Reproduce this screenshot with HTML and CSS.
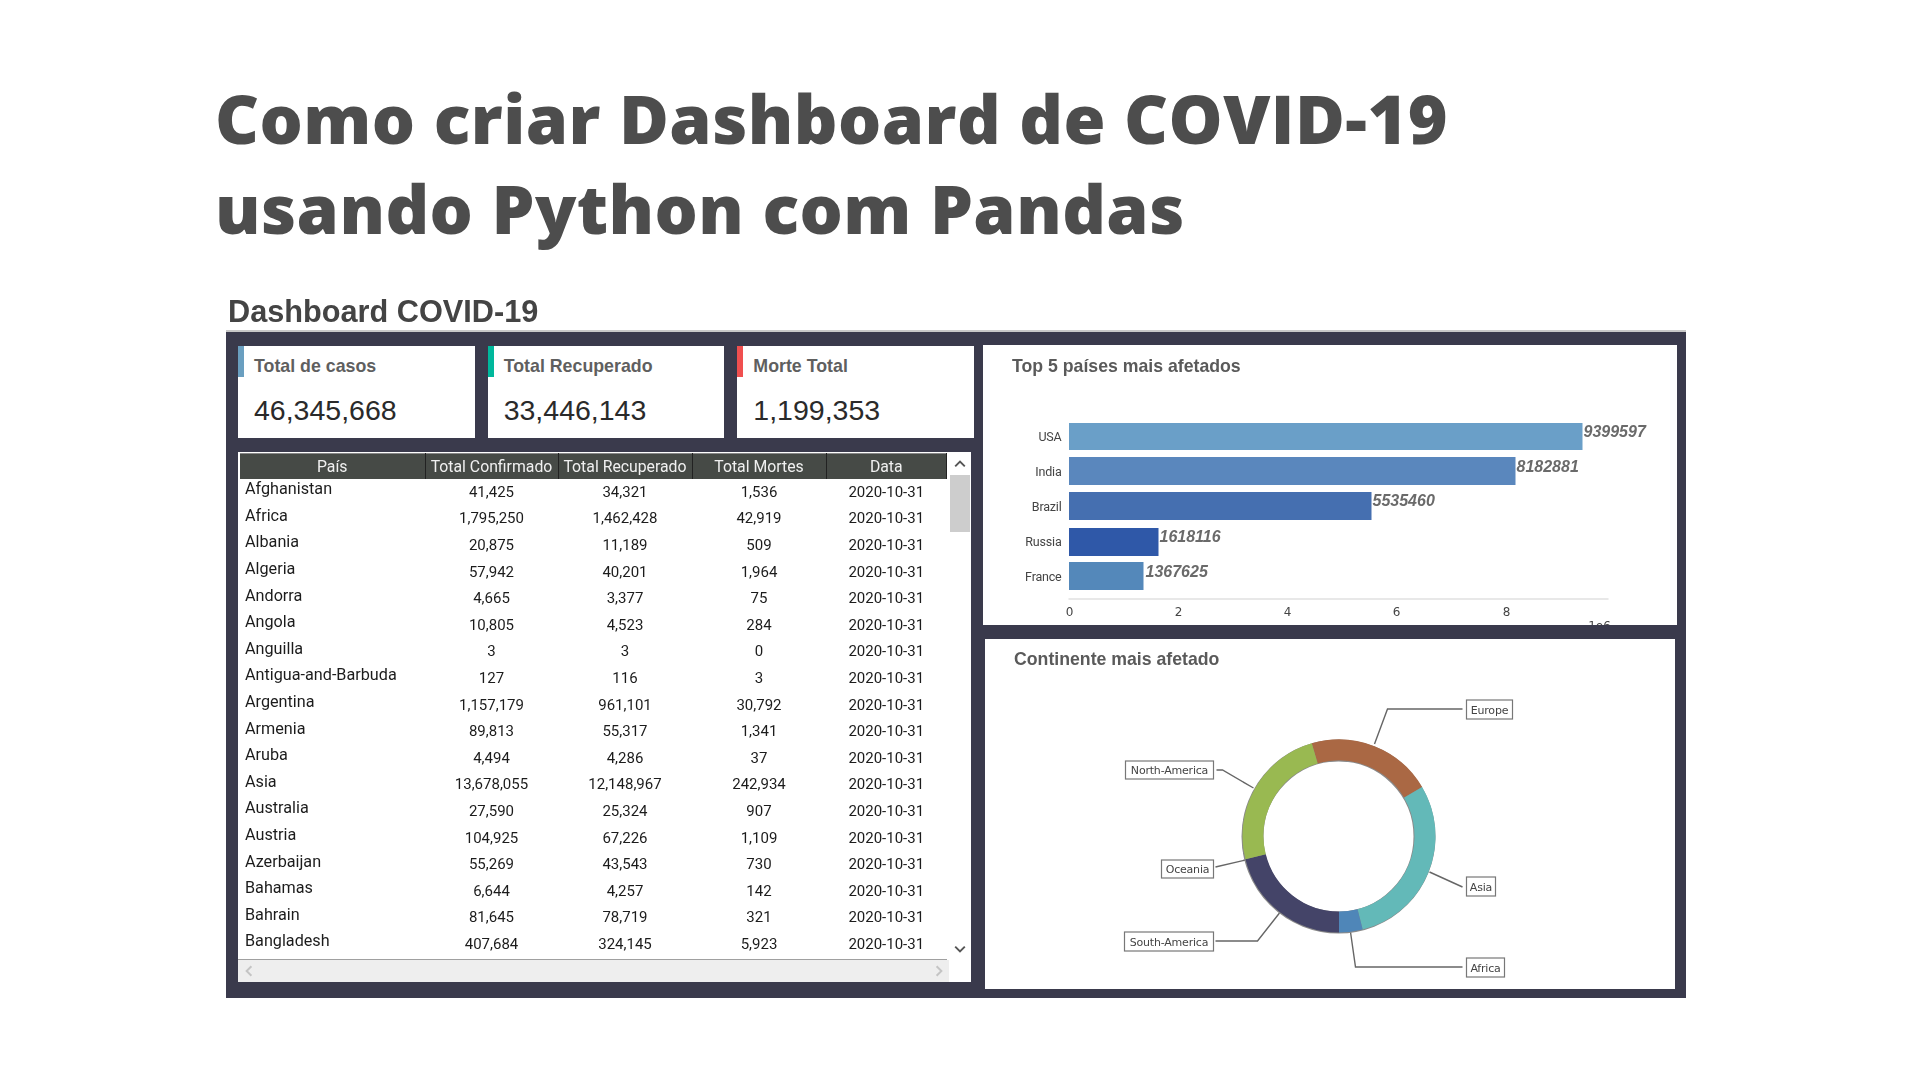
FILE: index.html
```html
<!DOCTYPE html>
<html lang="pt">
<head>
    <meta charset="UTF-8">
    <title>Como criar Dashboard de COVID-19 usando Python com Pandas</title>
    <link rel="stylesheet" href="styles.css">
</head>
<body>

<h1>Como criar Dashboard de COVID-19<br>usando Python com Pandas</h1>

<div class="dash">
    <h2>Dashboard COVID-19</h2>
    <div class="panel">
        <div class="left">
            <div class="cards">
                <div class="card">
                    <span class="accent blue"></span>
                    <div class="label">Total de casos</div>
                    <div class="value">46,345,668</div>
                </div>
                <div class="card">
                    <span class="accent green"></span>
                    <div class="label">Total Recuperado</div>
                    <div class="value">33,446,143</div>
                </div>
                <div class="card">
                    <span class="accent red"></span>
                    <div class="label">Morte Total</div>
                    <div class="value">1,199,353</div>
                </div>
            </div>

            <div class="tablebox">
                <div class="tablearea">
                    <table>
                        <thead>
                            <tr><th>País</th><th>Total Confirmado</th><th>Total Recuperado</th><th>Total Mortes</th><th>Data</th></tr>
                        </thead>
                        <tbody>
                            <tr><td>Afghanistan</td><td>41,425</td><td>34,321</td><td>1,536</td><td>2020-10-31</td></tr>
                            <tr><td>Africa</td><td>1,795,250</td><td>1,462,428</td><td>42,919</td><td>2020-10-31</td></tr>
                            <tr><td>Albania</td><td>20,875</td><td>11,189</td><td>509</td><td>2020-10-31</td></tr>
                            <tr><td>Algeria</td><td>57,942</td><td>40,201</td><td>1,964</td><td>2020-10-31</td></tr>
                            <tr><td>Andorra</td><td>4,665</td><td>3,377</td><td>75</td><td>2020-10-31</td></tr>
                            <tr><td>Angola</td><td>10,805</td><td>4,523</td><td>284</td><td>2020-10-31</td></tr>
                            <tr><td>Anguilla</td><td>3</td><td>3</td><td>0</td><td>2020-10-31</td></tr>
                            <tr><td>Antigua-and-Barbuda</td><td>127</td><td>116</td><td>3</td><td>2020-10-31</td></tr>
                            <tr><td>Argentina</td><td>1,157,179</td><td>961,101</td><td>30,792</td><td>2020-10-31</td></tr>
                            <tr><td>Armenia</td><td>89,813</td><td>55,317</td><td>1,341</td><td>2020-10-31</td></tr>
                            <tr><td>Aruba</td><td>4,494</td><td>4,286</td><td>37</td><td>2020-10-31</td></tr>
                            <tr><td>Asia</td><td>13,678,055</td><td>12,148,967</td><td>242,934</td><td>2020-10-31</td></tr>
                            <tr><td>Australia</td><td>27,590</td><td>25,324</td><td>907</td><td>2020-10-31</td></tr>
                            <tr><td>Austria</td><td>104,925</td><td>67,226</td><td>1,109</td><td>2020-10-31</td></tr>
                            <tr><td>Azerbaijan</td><td>55,269</td><td>43,543</td><td>730</td><td>2020-10-31</td></tr>
                            <tr><td>Bahamas</td><td>6,644</td><td>4,257</td><td>142</td><td>2020-10-31</td></tr>
                            <tr><td>Bahrain</td><td>81,645</td><td>78,719</td><td>321</td><td>2020-10-31</td></tr>
                            <tr><td>Bangladesh</td><td>407,684</td><td>324,145</td><td>5,923</td><td>2020-10-31</td></tr>
                        </tbody>
                    </table>
                </div>
                <div class="vscroll">
                    <svg class="arrow" viewBox="0 0 10 10"><path d="M1 7L5 3l4 4" fill="none" stroke="#555" stroke-width="1.6"/></svg>
                    <div class="thumb"></div>
                    <svg class="arrow down" viewBox="0 0 10 10"><path d="M1 3l4 4 4-4" fill="none" stroke="#555" stroke-width="1.6"/></svg>
                </div>
                <div class="hscroll">
                    <svg class="arrow" viewBox="0 0 10 10"><path d="M7 1L3 5l4 4" fill="none" stroke="#c4c4c4" stroke-width="1.6"/></svg>
                    <svg class="arrow" viewBox="0 0 10 10"><path d="M3 1l4 4-4 4" fill="none" stroke="#c4c4c4" stroke-width="1.6"/></svg>
                </div>
            </div>
        </div>

        <div class="right">
            <div class="chart top">
                <div class="chart-title">Top 5 países mais afetados</div>
                <!-- viewBox na mesma escala da página, origem no canto do card -->
                <svg class="plot" viewBox="984 345 693 280">
                    <rect x="1069.5" y="423" width="513.5" height="27" fill="#6a9fc8"/>
                    <rect x="1069.5" y="457" width="446.5" height="28" fill="#5a87bd"/>
                    <rect x="1069.5" y="492" width="302.5" height="28" fill="#456fb0"/>
                    <rect x="1069.5" y="528" width="89.5" height="28" fill="#2f58a8"/>
                    <rect x="1069.5" y="562" width="74.5" height="28" fill="#5488ba"/>

                    <text class="ylab" x="1062" y="441">USA</text>
                    <text class="ylab" x="1062" y="476">India</text>
                    <text class="ylab" x="1062" y="511">Brazil</text>
                    <text class="ylab" x="1062" y="546">Russia</text>
                    <text class="ylab" x="1062" y="581">France</text>

                    <text class="val" x="1584" y="437">9399597</text>
                    <text class="val" x="1517" y="472">8182881</text>
                    <text class="val" x="1373" y="506">5535460</text>
                    <text class="val" x="1160" y="542">1618116</text>
                    <text class="val" x="1146" y="577">1367625</text>

                    <line x1="1069" y1="599" x2="1609" y2="599" stroke="#e8e8e8" stroke-width="2"/>
                    <text class="xlab" x="1070" y="616">0</text>
                    <text class="xlab" x="1179" y="616">2</text>
                    <text class="xlab" x="1288" y="616">4</text>
                    <text class="xlab" x="1397" y="616">6</text>
                    <text class="xlab" x="1507" y="616">8</text>
                    <text class="xlab" x="1600" y="630">1e6</text>
                </svg>
            </div>
            <div class="chart bottom">
                <div class="chart-title">Continente mais afetado</div>
                <svg class="plot" viewBox="986 639 689 350">
                    <g fill="none" stroke="#666" stroke-width="1.4">
                        <path d="M1375 744L1388 709H1463"/>
                        <path d="M1430 872L1463 887"/>
                        <path d="M1351 932L1356 967H1463"/>
                        <path d="M1280 913L1258 941H1216"/>
                        <path d="M1246 860L1216 867"/>
                        <path d="M1254 788L1223 770H1217"/>
                    </g>

                    <g transform="translate(0.5 0)">
                        <circle cx="1338.5" cy="836.5" r="86" fill="none" stroke="#8a8a8a" stroke-width="22"/>
                        <!-- fatias do anel: arcos com raio 86 em volta de (1339,836) -->
                        <g fill="none" stroke-width="21">
                            <path stroke="#aa6844" d="M1314.7 753.4A86 86 0 0 1 1413.1 792.3"/>
                            <path stroke="#63b9b8" d="M1413.1 792.3A86 86 0 0 1 1360.1 919.4"/>
                            <path stroke="#4f86b8" d="M1360.1 919.4A86 86 0 0 1 1339 922"/>
                            <path stroke="#444468" d="M1339 922A86 86 0 0 1 1255.6 856.8"/>
                            <path stroke="#99b951" d="M1255.6 856.8A86 86 0 0 1 1314.7 753.4"/>
                        </g>
                    </g>

                    <g fill="#fff" stroke="#777" stroke-width="1.2">
                        <rect x="1467" y="700" width="46" height="19"/>
                        <rect x="1467" y="877" width="29" height="19"/>
                        <rect x="1467" y="958" width="38" height="19"/>
                        <rect x="1125" y="932" width="89" height="19"/>
                        <rect x="1162" y="860" width="52" height="18"/>
                        <rect x="1126" y="761" width="88" height="18"/>
                    </g>
                    <text class="tag" x="1490" y="714">Europe</text>
                    <text class="tag" x="1481.5" y="891">Asia</text>
                    <text class="tag" x="1486" y="972">Africa</text>
                    <text class="tag" x="1169.5" y="946">South-America</text>
                    <text class="tag" x="1188" y="873">Oceania</text>
                    <text class="tag" x="1170" y="774">North-America</text>
                </svg>
            </div>
        </div>
    </div>
</div>

</body>
</html>
```

FILE: styles.css
```css
body {
    margin: 0;
    padding: 73px 0 0 215px;
    background: #fff;
}
h1 {
    margin: 0;
    font-family: "Open Sans", sans-serif;
    font-weight: 800;
    font-size: 68px;
    line-height: 90px;
    letter-spacing: 0.45px;
    color: #4d4d4d;
}
.dash {
    width: 1460px;
    margin-left: 11px;
    filter: blur(0.5px);
}
h2 {
    margin: 0;
    height: 79px;
    padding: 41px 0 0 2px;
    box-sizing: border-box;
    border-bottom: 2px solid #c8c8c8;
    font-family: "Liberation Sans", Arial, sans-serif;
    font-weight: 700;
    font-size: 30.7px;
    line-height: 36px;
    color: #444;
}
.panel {
    height: 666px;
    box-sizing: border-box;
    padding: 14px 9px 0 12px;
    background: #3a3a4c;
    display: flex;
    justify-content: space-between;
}
.left {
    width: 736px;
}
.cards {
    display: flex;
    gap: 13px;
}
.card {
    position: relative;
    width: 237px;
    height: 92px;
    box-sizing: border-box;
    padding-left: 16px;
    background: #fff;
    font-family: "Liberation Sans", Arial, sans-serif;
}
.accent {
    position: absolute;
    left: 0;
    top: 0;
    width: 6px;
    height: 31px;
}
.accent.blue { background: #6a9fc0; }
.accent.green { background: #00b89c; }
.accent.red { background: #f04f4f; }
.label {
    padding-top: 10px;
    font-size: 17.8px;
    line-height: 20px;
    font-weight: 700;
    color: #5f5f5f;
}
.value {
    padding-top: 18px;
    font-size: 28.5px;
    line-height: 32px;
    color: #2a2a2a;
}
.tablebox {
    width: 733px;
    height: 530px;
    margin-top: 14px;
    background: #fff;
    display: grid;
    grid-template-columns: 711px 22px;
    grid-template-rows: 508px 22px;
}
.tablearea {
    padding: 1px 0 0 2px;
    box-sizing: border-box;
    width: 709px;
    border-bottom: 1px solid #a0a0a0;
}
table {
    width: 707px;
    table-layout: fixed;
    border-collapse: collapse;
    font-family: Roboto, sans-serif;
    font-size: 15px;
    color: #1c1c1c;
}
th {
    height: 25px;
    padding: 0;
    box-sizing: border-box;
    font-size: 15.8px;
    font-weight: 400;
    background: #464a46;
    color: #f0f0f0;
    border-right: 1px solid #222;
    border-top: 1px solid #888;
}
th:nth-child(1) { width: 185px; }
th:nth-child(2) { width: 133px; }
th:nth-child(3) { width: 134px; }
th:nth-child(4) { width: 134px; }
td {
    height: 26.6px;
    padding: 0;
    text-align: center;
}
td:first-child {
    text-align: left;
    padding: 0 0 6px 5px;
    box-sizing: border-box;
    font-size: 16.2px;
}
.vscroll {
    grid-row: 1 / 3;
    grid-column: 2;
    display: flex;
    flex-direction: column;
    align-items: center;
    padding: 6px 1px 0;
}
.arrow {
    width: 12px;
    height: 12px;
    flex: none;
}
.thumb {
    width: 20px;
    height: 57px;
    margin-top: 5px;
    background: #cdcdcd;
}
.arrow.down {
    margin-top: 411px;
}
.hscroll {
    grid-row: 2;
    grid-column: 1;
    background: #eee;
    display: flex;
    justify-content: space-between;
    align-items: center;
    padding: 0 4px 0 5px;
}
.right {
    width: 694px;
    margin-top: -1px;
}
.chart {
    position: relative;
    background: #fff;
    overflow: hidden;
    font-family: "Liberation Sans", Arial, sans-serif;
}
.chart.top {
    height: 280px;
}
.chart.bottom {
    height: 350px;
    margin: 14px 2px 0;
}
.chart-title {
    position: absolute;
    top: 11px;
    left: 29px;
    font-size: 17.7px;
    line-height: 20px;
    font-weight: 700;
    color: #5a5a5a;
}
.chart.bottom .chart-title {
    top: 10px;
}
.plot {
    display: block;
    width: 100%;
    height: 100%;
}
.ylab {
    font-family: Roboto, sans-serif;
    font-size: 12.5px;
    letter-spacing: -0.2px;
    fill: #444;
    text-anchor: end;
}
.val {
    font-family: "Liberation Sans", sans-serif;
    font-size: 16px;
    font-weight: 700;
    font-style: italic;
    fill: #6a6a6a;
}
.xlab {
    font-family: "DejaVu Sans", sans-serif;
    font-size: 12px;
    fill: #444;
    text-anchor: middle;
}
.tag {
    font-family: "DejaVu Sans", sans-serif;
    font-size: 11px;
    letter-spacing: -0.2px;
    fill: #444;
    text-anchor: middle;
}
```
